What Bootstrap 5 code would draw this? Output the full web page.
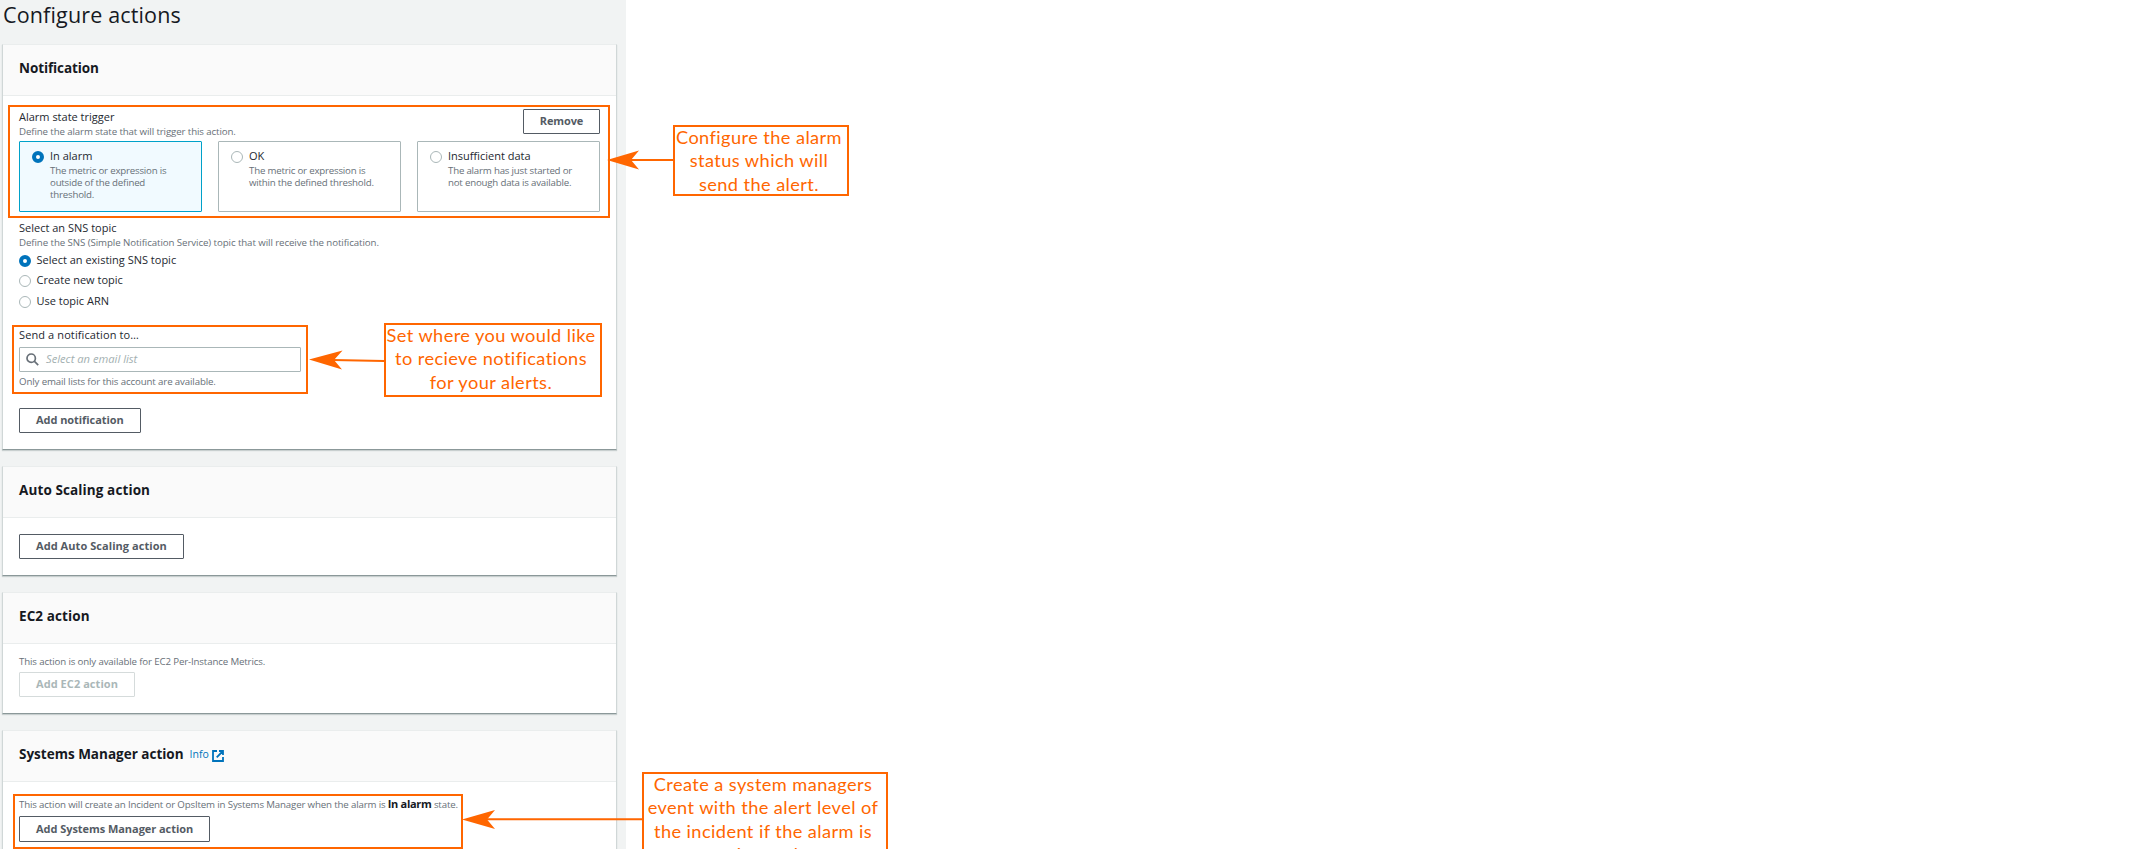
<!DOCTYPE html>
<html lang="en">
<head>
<meta charset="utf-8">
<title>Configure actions</title>
<link rel="stylesheet" href="https://cdn.jsdelivr.net/npm/bootstrap@5.3.0/dist/css/bootstrap.min.css">
<script src="https://cdn.jsdelivr.net/npm/bootstrap@5.3.0/dist/js/bootstrap.bundle.min.js"></script>
<style>
body{font-family:"Open Sans","Noto Sans",sans-serif;color:#16191f;background:#fff;overflow:hidden}
.stage{height:849px}
.panel{width:626px;height:849px;background:#f1f3f3;padding:0 9px 0 2px}
h1{font-size:21.5px;line-height:29px;height:44px;margin:0;padding-left:1px;letter-spacing:.15px;font-weight:400}
.card{border:1px solid #d0d7d7;border-top-color:#eaeded;border-bottom-color:#8b9899;border-radius:0;margin-bottom:16px;box-shadow:0 1px 1px #c8cfcf;color:inherit}
.card-header{height:51px;background:#fafafa;border-bottom:1px solid #eaeded;padding:0 16px 4px;border-radius:0!important}
.card-header h2{font-size:13.5px;font-weight:700;line-height:20px;margin:0}
.card-body{padding:0 16px 15px}
.lbl{font-size:11px;line-height:14px;color:#24282f;white-space:nowrap}
.hint{font-size:9.7px;line-height:12px;color:#687078;letter-spacing:-.11px;white-space:nowrap;position:relative;top:1px}
.btn{font-size:11px;font-weight:700;line-height:14px;height:25px;padding:4px 16px 5px;border:1px solid #545b64;border-radius:1px;color:#545b64;background:#fff;display:block;white-space:nowrap}
.btn:disabled{color:#aab7b8;border-color:#d5dbdb;opacity:1}
.tile{height:71px;border:1px solid #aab7b8;border-radius:1px;padding:7px 0 0 12px;gap:6px}
.tile.on{border-color:#00a1c9;background:#f1faff}
.dot{width:12px;height:12px;border:1px solid #aab7b8;border-radius:50%;background:#fff;flex:none}
.dot.on{border:4px solid #0073bb}
.tile .dot{margin-top:2px}
.tile .hint{letter-spacing:-.2px}
.opt{height:20.5px;gap:5.5px}
.opt .lbl{margin-top:-2px;letter-spacing:0}
.search{width:282px;height:25px;border:1px solid #aab7b8;border-radius:1px;padding:0 6px 0 6px;margin:5px 0 4px}
.search span{font-size:11.2px;font-style:italic;color:#a3b0b1;margin-left:7px}
.info{font-size:10.5px;color:#0073bb;text-decoration:none;margin:1px 0 0 6px}
.marks{left:0;top:0;pointer-events:none}
.callout-note{border:2px solid #f60;color:#f60;font:18.2px/23.4px Lato,sans-serif;letter-spacing:.42px;text-align:center;white-space:nowrap;overflow:hidden}
.callout-note div{margin:-1px 3px 0 -1px}
.c1{left:673px;top:125px;width:176px;height:71px}
.c2{left:384px;top:323px;width:218px;height:74px}
.c3{left:642px;top:772px;width:246px;height:100px}
</style>
</head>
<body>
<div class="stage position-relative overflow-hidden">
<main class="panel">
  <h1>Configure actions</h1>

  <section class="card" style="height:406px">
    <div class="card-header d-flex align-items-center"><h2 style="letter-spacing:-.1px">Notification</h2></div>
    <div class="card-body" style="padding-top:14px">
      <div class="d-flex justify-content-between" style="height:31px">
        <div>
          <div class="lbl mb-0">Alarm state trigger</div>
          <div class="hint" style="padding-top:1px">Define the alarm state that will trigger this action.</div>
        </div>
        <button class="btn px-0" style="margin-top:-1px;width:77px;letter-spacing:-.1px">Remove</button>
      </div>
      <div class="row g-0 flex-nowrap" style="gap:16px">
        <div class="col tile on d-flex"><i class="dot on"></i><div><div class="lbl" style="height:15px">In alarm</div><div class="hint">The metric or expression is<br>outside of the defined<br>threshold.</div></div></div>
        <div class="col tile d-flex"><i class="dot"></i><div><div class="lbl" style="height:15px">OK</div><div class="hint">The metric or expression is<br>within the defined threshold.</div></div></div>
        <div class="col tile d-flex"><i class="dot"></i><div><div class="lbl" style="height:15px">Insufficient data</div><div class="hint">The alarm has just started or<br>not enough data is available.</div></div></div>
      </div>
      <div class="lbl" style="margin-top:9px;height:15px">Select an SNS topic</div>
      <div class="hint" style="letter-spacing:-.08px">Define the SNS (Simple Notification Service) topic that will receive the notification.</div>
      <div style="margin:2.5px 0 15.5px">
        <div class="opt d-flex align-items-center"><i class="dot on"></i><span class="lbl">Select an existing SNS topic</span></div>
        <div class="opt d-flex align-items-center"><i class="dot"></i><span class="lbl">Create new topic</span></div>
        <div class="opt d-flex align-items-center"><i class="dot"></i><span class="lbl">Use topic ARN</span></div>
      </div>
      <div class="lbl" style="letter-spacing:.11px">Send a notification to…</div>
      <div class="search d-flex align-items-center">
        <svg width="13" height="13" viewBox="0 0 13 13" fill="none" stroke="#687078" stroke-width="1.7"><circle cx="5.2" cy="5.2" r="4.2"/><path d="M8.2 8.2 12.2 12.2"/></svg>
        <span>Select an email list</span>
      </div>
      <div class="hint" style="top:0;letter-spacing:-.13px">Only email lists for this account are available.</div>
      <button class="btn" style="margin-top:20px;letter-spacing:-.06px">Add notification</button>
    </div>
  </section>

  <section class="card" style="height:110px">
    <div class="card-header d-flex align-items-center"><h2 style="letter-spacing:.11px">Auto Scaling action</h2></div>
    <div class="card-body" style="padding-top:16px"><button class="btn" style="letter-spacing:.06px">Add Auto Scaling action</button></div>
  </section>

  <section class="card" style="height:122px">
    <div class="card-header d-flex align-items-center"><h2 style="letter-spacing:.1px">EC2 action</h2></div>
    <div class="card-body" style="padding-top:11px">
      <div class="hint" style="letter-spacing:-.14px">This action is only available for EC2 Per-Instance Metrics.</div>
      <button class="btn" style="margin-top:5px;letter-spacing:.06px" disabled>Add EC2 action</button>
    </div>
  </section>

  <section class="card" style="height:160px">
    <div class="card-header d-flex align-items-center"><h2>Systems Manager action</h2>
      <a class="info" href="#">Info</a>
      <svg style="margin:3px 0 0 3.5px" width="12" height="12" viewBox="0 0 12 12" fill="none" stroke="#0073bb" stroke-width="1.8"><path d="M5 1H1v10h10V7M7 1h4v4M11 1 4.700 7.300"/></svg>
    </div>
    <div class="card-body" style="padding-top:16px">
      <div class="hint" style="letter-spacing:-.155px">This action will create an Incident or OpsItem in Systems Manager when the alarm is <b style="font-size:11px;line-height:10px;color:#16191f;letter-spacing:-.3px">In alarm</b> state.</div>
      <button class="btn" style="margin-top:6px;height:26px;letter-spacing:-.05px">Add Systems Manager action</button>
    </div>
  </section>
</main>

<svg class="marks position-absolute" width="900" height="849" fill="none" stroke="#f60" stroke-width="2">
  <rect x="9" y="106" width="600" height="111"/>
  <rect x="13" y="326" width="294" height="67"/>
  <rect x="14" y="795" width="448" height="53"/>
  <path d="M673 160H630M384 361 333 360M642 819.300H486"/>
  <g fill="#f60" stroke="none">
    <path d="M607 160 639 150.500 631 160 639 169.500Z"/>
    <path d="M309 359.500 342.500 350.500 334 360 342 369.500Z"/>
    <path d="M462 819.500 495 810 487 819.500 495 829Z"/>
  </g>
</svg>
<div class="callout-note c1 position-absolute"><div>Configure the alarm<br>status which will<br>send the alert.</div></div>
<div class="callout-note c2 position-absolute"><div>Set where you would like<br>to recieve notifications<br>for your alerts.</div></div>
<div class="callout-note c3 position-absolute"><div>Create a system managers<br>event with the alert level of<br>the incident if the alarm is<br>triggered.</div></div>
</div>
</body>
</html>
